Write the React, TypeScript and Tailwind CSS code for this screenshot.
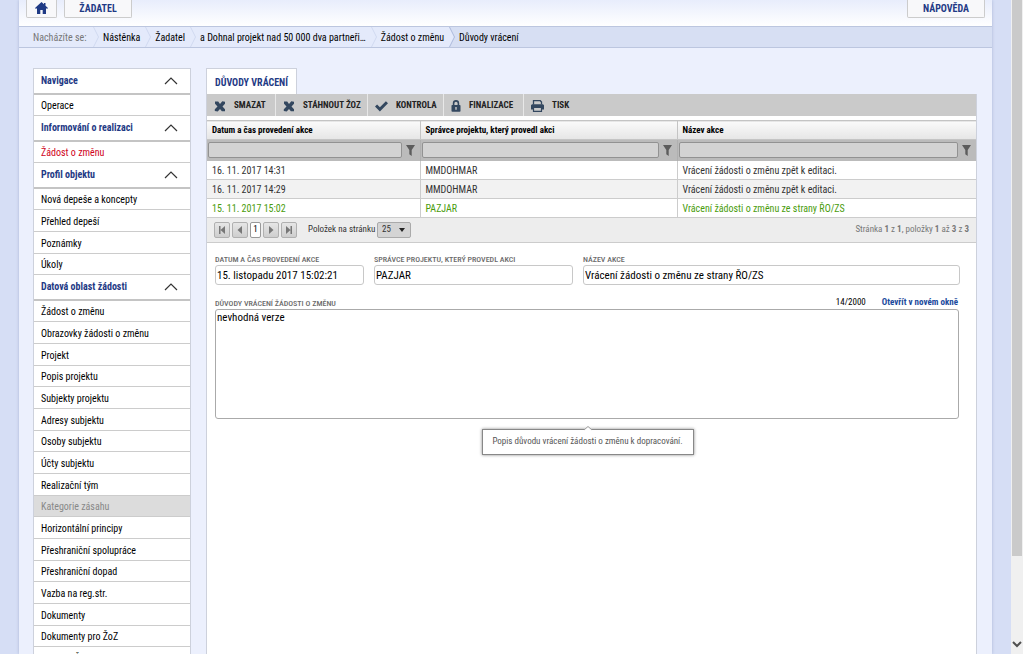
import { useState } from "react";

interface NavItem {
  label: string;
  state?: "active" | "disabled";
}

interface NavGroup {
  title: string;
  items: NavItem[];
}

const groups: NavGroup[] = [
  { title: "Navigace", items: [{ label: "Operace" }] },
  {
    title: "Informování o realizaci",
    items: [{ label: "Žádost o změnu", state: "active" }],
  },
  {
    title: "Profil objektu",
    items: [
      { label: "Nová depeše a koncepty" },
      { label: "Přehled depeší" },
      { label: "Poznámky" },
      { label: "Úkoly" },
    ],
  },
  {
    title: "Datová oblast žádosti",
    items: [
      { label: "Žádost o změnu" },
      { label: "Obrazovky žádosti o změnu" },
      { label: "Projekt" },
      { label: "Popis projektu" },
      { label: "Subjekty projektu" },
      { label: "Adresy subjektu" },
      { label: "Osoby subjektu" },
      { label: "Účty subjektu" },
      { label: "Realizační tým" },
      { label: "Kategorie zásahu", state: "disabled" },
      { label: "Horizontální principy" },
      { label: "Přeshraniční spolupráce" },
      { label: "Přeshraniční dopad" },
      { label: "Vazba na reg.str." },
      { label: "Dokumenty" },
      { label: "Dokumenty pro ŽoZ" },
      { label: "Seznam Žádostí" },
    ],
  },
];

const crumbs = [
  "Nástěnka",
  "Žadatel",
  "a Dohnal projekt nad 50 000 dva partneři…",
  "Žádost o změnu",
];

const rows = [
  { date: "16. 11. 2017 14:31", user: "MMDOHMAR", action: "Vrácení žádosti o změnu zpět k editaci." },
  { date: "16. 11. 2017 14:29", user: "MMDOHMAR", action: "Vrácení žádosti o změnu zpět k editaci." },
  { date: "15. 11. 2017 15:02", user: "PAZJAR", action: "Vrácení žádosti o změnu ze strany ŘO/ZS" },
];

const columns = [
  "Datum a čas provedení akce",
  "Správce projektu, který provedl akci",
  "Název akce",
];

function HomeIcon() {
  return (
    <svg width="13" height="12" viewBox="0 0 13 12" fill="#1f3a85" aria-hidden="true">
      <path d="M6.500 0 0 6l1 1 1-.9V12h3.300V8h2.400v4H11V6.100l1 .9 1-1-2.500-2.300V1H9v1.300z" />
    </svg>
  );
}

function CrossIcon() {
  return (
    <svg width="12" height="11" viewBox="0 0 12 11" fill="#33475f" aria-hidden="true">
      <path d="M1 .5h3.200L6 3 8.300.3l2.700.5v2L8.500 5.500 11 8.200v2.100H7.900L6 8 3.700 10.500.8 10V8.200l2.700-2.700L1 2.800z" />
    </svg>
  );
}

function CheckIcon() {
  return (
    <svg width="13" height="11" viewBox="0 0 13 11" fill="#33475f" aria-hidden="true">
      <path d="M0 5.500 2.100 3.500 4.900 6.200 10.900.3 13 2.300 4.900 10.400z" />
    </svg>
  );
}

function LockIcon() {
  return (
    <svg width="10" height="12" viewBox="0 0 10 12" aria-hidden="true">
      <path d="M2.600 5.500V3.300a2.400 2.400 0 0 1 4.800 0v2.200" fill="none" stroke="#33475f" strokeWidth="1.600" />
      <rect x="0.500" y="5" width="9" height="6.800" rx="0.800" fill="#33475f" />
      <path d="M5 7v2.800" stroke="#cacaca" strokeWidth="1.400" />
    </svg>
  );
}

function PrintIcon() {
  return (
    <svg width="13" height="12" viewBox="0 0 13 12" aria-hidden="true">
      <path d="M2.500 4.500V.7h6.800l1.200 1.300v2.500" fill="none" stroke="#33475f" strokeWidth="1.300" />
      <path d="M1 4.300h11l1 1v4.200h-2.500V8h-8v1.500H0V5.300z" fill="#33475f" />
      <path d="M2.500 8v3.400h8V8" fill="none" stroke="#33475f" strokeWidth="1.200" />
    </svg>
  );
}

function FunnelIcon() {
  return (
    <svg width="9" height="11" viewBox="0 0 9 11" fill="#5c5c5c" aria-hidden="true">
      <path d="M0 0h9L5.700 5v6L3.300 9.300V5z" />
    </svg>
  );
}

function CrumbArrow(props: { last?: boolean }) {
  return (
    <svg width="6" height="20" viewBox="0 0 6 20" className="shrink-0" aria-hidden="true">
      <path d="M0 0 5 10 0 20z" fill="#e4eafb" />
      <path d="M.5 0 5.500 10 .5 20" fill="none" stroke={props.last ? "#aebbdc" : "#d0d9f0"} />
    </svg>
  );
}

const tools = [
  { label: "SMAZAT", icon: <CrossIcon />, width: "w-[69px]" },
  { label: "STÁHNOUT ŽOZ", icon: <CrossIcon />, width: "w-[92px]" },
  { label: "KONTROLA", icon: <CheckIcon />, width: "w-[76px]" },
  { label: "FINALIZACE", icon: <LockIcon />, width: "w-[80px]" },
  { label: "TISK", icon: <PrintIcon />, width: "w-[60px]" },
];

const pagerPaths = {
  first: "M1 0h1.500v8H1zM7 0v8L2.500 4z",
  prev: "M6 0v8L1.500 4z",
  next: "M2 0v8l4.500-4z",
  last: "M5.500 0H7v8H5.500zM1 0v8l4.500-4z",
};

function PagerButton(props: { label: string; path: string }) {
  return (
    <button
      aria-label={props.label}
      className="flex h-4 w-4 items-center justify-center rounded-[2px] border border-[#b0b0b0] bg-linear-to-b from-[#e6e6e6] to-[#cecece]"
    >
      <svg width="8" height="8" viewBox="0 0 8 8" fill="#777777" aria-hidden="true">
        <path d={props.path} />
      </svg>
    </button>
  );
}

function Sidebar() {
  const [closed, setClosed] = useState<string[]>([]);

  const toggle = (title: string) => {
    setClosed(
      closed.includes(title) ? closed.filter((t) => t !== title) : [...closed, title],
    );
  };

  return (
    <nav className="w-[158px] shrink-0 self-start border border-[#cdd1dc] bg-white">
      {groups.map((group) => (
        <section key={group.title}>
          <button
            onClick={() => toggle(group.title)}
            className="flex h-[26px] w-full items-center justify-between border-b-2 border-[#c4c4c4] pr-3 pb-px pl-[7px] font-bold text-[#1f3a85]"
          >
            {group.title}
            <svg width="14" height="8" viewBox="0 0 14 8" fill="none" stroke="#333333" strokeWidth="1.200" aria-hidden="true">
              <path d="M1 7 7 1l6 6" />
            </svg>
          </button>
          {!closed.includes(group.title) && (
            <ul>
              {group.items.map((item) => (
                <li
                  key={item.label}
                  className={`h-[22px] border-b border-[#cccccc] nth-[3n+1]:h-[21px] ${item.state === "disabled" ? "bg-[#dcdcdc]" : ""}`}
                >
                  <a
                    href="#"
                    className={`flex h-full items-center pt-px pl-[7px] ${
                      item.state === "active"
                        ? "text-[#d0021b]"
                        : item.state === "disabled"
                          ? "text-[#888888]"
                          : "text-black"
                    }`}
                  >
                    {item.label}
                  </a>
                </li>
              ))}
            </ul>
          )}
        </section>
      ))}
    </nav>
  );
}

function Field(props: { id: string; label: string; value: string; width: string }) {
  return (
    <div className={props.width}>
      <label htmlFor={props.id} className="block text-[8px] leading-[10px] font-medium whitespace-nowrap text-[#6a6a6a]">
        {props.label}
      </label>
      <input
        id={props.id}
        defaultValue={props.value}
        className="block h-5 w-full rounded-[3px] border border-[#c8c8c8] px-px text-[11px] text-black outline-none"
      />
    </div>
  );
}

export default function App() {
  const [text, setText] = useState("nevhodná verze");

  return (
    <div className="flex h-screen overflow-hidden bg-[#d6def5] font-['Roboto_Condensed',Roboto,sans-serif] text-[10px] text-[#333333]">
      <div className="mx-[19px] flex min-w-0 flex-1 flex-col bg-[#ecf0fd] shadow-[0_0_3px_#aab6d6]">
        <header className="flex h-[26px] shrink-0 items-start justify-between bg-linear-to-b from-[#e8edfc] to-white px-[7px]">
          <div className="flex gap-[7px]">
            <a href="#" aria-label="Domů" className="flex h-[18px] w-[31px] items-center justify-center rounded-b-[2px] border border-t-0 border-[#cccccc] bg-[#f8f8fa] pb-px">
              <HomeIcon />
            </a>
            <a href="#" className="flex h-[18px] w-[68px] items-center justify-center rounded-b-[2px] border border-t-0 border-[#cccccc] bg-[#f8f8fa] font-bold text-[#1f3a85]">
              ŽADATEL
            </a>
          </div>
          <a href="#" className="flex h-[18px] w-[78px] items-center justify-center rounded-b-[2px] border border-t-0 border-[#cccccc] bg-[#f8f8fa] font-bold text-[#1f3a85]">
            NÁPOVĚDA
          </a>
        </header>

        <div className="flex h-[22px] shrink-0 border-y border-[#bcc6df] bg-[#d7dff3] whitespace-nowrap text-black">
          <div className="flex items-center bg-[#e4eafb]">
            <span className="w-[74px] pl-[14px] text-[#777777]">Nacházíte se:</span>
            {crumbs.map((crumb) => (
              <div key={crumb} className="flex items-center">
                <CrumbArrow />
                <a href="#" className="pr-[5px] pl-1">{crumb}</a>
              </div>
            ))}
          </div>
          <CrumbArrow last />
          <span className="self-center pl-1">Důvody vrácení</span>
        </div>

        <div className="flex min-h-0 flex-1 items-stretch gap-[15px] overflow-hidden pt-5 pr-[15px] pl-[14px]">
          <Sidebar />

          <main className="flex min-w-0 flex-1 flex-col">
            <h1 className="flex h-[26px] w-[91px] shrink-0 items-center justify-center border border-b-0 border-[#cdd1dc] bg-white pt-0.5 font-bold whitespace-nowrap text-[#1f3a85]">
              DŮVODY VRÁCENÍ
            </h1>
            <div className="flex-1 border-x border-[#cdd1dc] bg-white">
              <div className="flex h-[22px] bg-[#cacaca] text-[9px] font-bold text-[#222222]">
                {tools.map((tool) => (
                  <button
                    key={tool.label}
                    className={`flex items-center gap-2 border-r border-[#e8e8e8] pt-0.5 pl-[7px] whitespace-nowrap last:border-r-0 ${tool.width}`}
                  >
                    {tool.icon}
                    {tool.label}
                  </button>
                ))}
              </div>

              <table className="mt-1 w-full table-fixed border-collapse text-left">
                <colgroup>
                  <col className="w-[213px]" />
                  <col className="w-[257px]" />
                  <col />
                </colgroup>
                <thead>
                  <tr className="h-[19px] border-y border-[#c4c4c4] bg-linear-to-b from-[#fafafa] to-[#e6e6e6] text-[9px] text-black">
                    {columns.map((column) => (
                      <th key={column} className="border-r border-[#c4c4c4] px-[5px] pt-0.5 pb-0 last:border-r-0">
                        {column}
                      </th>
                    ))}
                  </tr>
                  <tr className="h-[21px] bg-[#bbbbbb]">
                    {columns.map((column) => (
                      <td key={column} className="border-r border-[#b0b0b0] p-0 last:border-r-0">
                        <div className="flex h-5 items-center gap-1 pr-[5px] pl-px">
                          <input
                            aria-label={column}
                            className="h-4 min-w-0 flex-1 rounded-[2px] border border-[#929292] bg-[#d3d3d3] px-1 outline-none"
                          />
                          <button aria-label={`Filtr: ${column}`}>
                            <FunnelIcon />
                          </button>
                        </div>
                      </td>
                    ))}
                  </tr>
                </thead>
                <tbody>
                  {rows.map((row) => (
                    <tr
                      key={row.date}
                      className="h-[19px] border-b border-[#cccccc] even:bg-[#f2f2f2] last:text-[#4a9c0c]"
                    >
                      <td className="border-r border-[#cccccc] px-[5px] pt-px pb-0">{row.date}</td>
                      <td className="border-r border-[#cccccc] px-[5px] pt-px pb-0">{row.user}</td>
                      <td className="px-[5px] pt-px pb-0">{row.action}</td>
                    </tr>
                  ))}
                </tbody>
              </table>

              <div className="flex h-[25px] items-center justify-between border-b border-[#cccccc] bg-[#ededed] px-[7px] text-[9px]">
                <div className="flex items-center">
                  <div className="flex items-center gap-0.5">
                    <PagerButton label="První stránka" path={pagerPaths.first} />
                    <PagerButton label="Předchozí stránka" path={pagerPaths.prev} />
                    <button className="h-4 w-[11px] rounded-[2px] border border-[#999999] bg-white text-black">1</button>
                    <PagerButton label="Další stránka" path={pagerPaths.next} />
                    <PagerButton label="Poslední stránka" path={pagerPaths.last} />
                  </div>
                  <label htmlFor="page-size" className="w-20 pl-[11px] whitespace-nowrap">
                    Položek na stránku
                  </label>
                  <div className="relative">
                    <select
                      id="page-size"
                      defaultValue="25"
                      className="block h-4 w-[34px] appearance-none rounded-[2px] border border-[#aaaaaa] bg-[#d4d4d4] pl-1 outline-none"
                    >
                      <option>10</option>
                      <option>25</option>
                      <option>50</option>
                    </select>
                    <svg width="6" height="4" viewBox="0 0 6 4" fill="#222222" className="pointer-events-none absolute top-1.5 right-1.5" aria-hidden="true">
                      <path d="M0 0h6L3 4z" />
                    </svg>
                  </div>
                </div>
                <p className="text-[#777777]">
                  Stránka <b>1</b> z <b>1</b>, položky <b>1</b> až <b>3</b> z <b>3</b>
                </p>
              </div>

              <form className="pt-3 pr-4 pl-2">
                <div className="flex gap-[10px]">
                  <Field id="date" label="DATUM A ČAS PROVEDENÍ AKCE" value="15. listopadu 2017 15:02:21" width="w-[149px]" />
                  <Field id="manager" label="SPRÁVCE PROJEKTU, KTERÝ PROVEDL AKCI" value="PAZJAR" width="w-[199px]" />
                  <Field id="action" label="NÁZEV AKCE" value="Vrácení žádosti o změnu ze strany ŘO/ZS" width="min-w-0 flex-1" />
                </div>

                <div className="mt-3 flex h-3 items-center justify-between pr-0.5">
                  <label htmlFor="reason" className="pt-0.5 text-[8px] font-medium text-[#6a6a6a]">
                    DŮVODY VRÁCENÍ ŽÁDOSTI O ZMĚNU
                  </label>
                  <div className="flex gap-4 text-[9px] text-black">
                    <span>{text.length}/2000</span>
                    <a href="#" className="font-bold text-[#1a4a9c]">Otevřít v novém okně</a>
                  </div>
                </div>
                <div className="relative pr-px">
                  <textarea
                    id="reason"
                    value={text}
                    onChange={(e) => setText(e.target.value)}
                    className="block h-[110px] w-full resize-none rounded-[3px] border border-[#aaaaaa] px-px text-[11px] leading-4 text-black outline-none"
                  />
                  <div
                    role="tooltip"
                    className="absolute top-full left-1/2 mt-[10px] flex h-[26px] w-[212px] -translate-x-1/2 items-center justify-center border border-[#888888] bg-white text-[9px] whitespace-nowrap text-[#555555] shadow-[0_0_3px_#888888]"
                  >
                    <svg width="8" height="5" viewBox="0 0 8 5" className="absolute -top-1 left-1/2 -translate-x-1/2" aria-hidden="true">
                      <path d="M0 4 4 .5 8 4v1H0z" fill="white" />
                      <path d="M0 4 4 .5 8 4" fill="none" stroke="#999999" />
                    </svg>
                    Popis důvodu vrácení žádosti o změnu k dopracování.
                  </div>
                </div>
              </form>
            </div>
          </main>
        </div>
      </div>

      {/* scroll track */}
      <div className="flex w-3 shrink-0 flex-col justify-between bg-[#f0f0f0]" aria-hidden="true">
        <div className="ml-px h-[85%] w-[10px] bg-[#cacaca]" />
        <svg width="12" height="20" viewBox="0 0 12 20" fill="none" stroke="#505050" strokeWidth="2">
          <path d="m2 8 4 4 4-4" />
        </svg>
      </div>
    </div>
  );
}
